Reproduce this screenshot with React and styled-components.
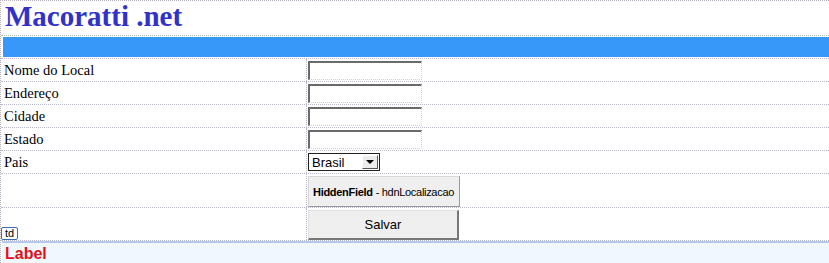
import React from 'react';
import styled, { createGlobalStyle } from 'styled-components';

const Global = createGlobalStyle`
  html, body { margin: 0; padding: 0; background: #fff; }
  body { width: 829px; height: 263px; overflow: hidden; }
`;

const Page = styled.div`
  width: 829px;
  height: 263px;
  box-sizing: border-box;
  border-top: 1px dotted #b8b0c0;
  border-left: 1px dotted #b8b0c0;
  font-family: "Liberation Serif", "Times New Roman", serif;
`;

const Header = styled.div`
  height: 34px;
  padding-left: 4px;
  border-bottom: 1px dotted #b0c0b0;
  display: flex;
  align-items: flex-end;
`;

const Title = styled.h1`
  margin: 0 0 4px;
  font-size: 29px;
  line-height: 29px;
  font-weight: bold;
  color: #3232c8;
`;

const BarCell = styled.div`
  padding: 1px 0 1px 2px;
  border-bottom: 1px dotted #c0b8d0;
`;

const Bar = styled.div`
  height: 20px;
  background: #3898fa;
`;

const Row = styled.div`
  display: grid;
  grid-template-columns: 305px 1fr;
  height: ${p => p.$h}px;
  border-bottom: 1px dotted #b8b8c8;
  box-sizing: border-box;
  position: relative;
`;

const LabelCell = styled.div`
  padding-left: 3px;
  font-size: 14.5px;
  display: flex;
  align-items: center;
  color: #000;
`;

const FieldCell = styled.div`
  border-left: 1px dotted #b8b8c8;
  padding-left: 1px;
  display: flex;
  align-items: ${p => p.$align || 'center'};
`;

const TextBox = styled.div`
  width: 114px;
  height: 19px;
  box-sizing: border-box;
  border-top: 2px solid #6a6a6a;
  border-left: 2px solid #6a6a6a;
  border-right: 1px dotted #d0d0d0;
  border-bottom: 1px dotted #d0d0d0;
  background: #fff;
`;

const Select = styled.div`
  width: 72px;
  height: 18px;
  box-sizing: border-box;
  border: 1px solid #222;
  display: flex;
  align-items: center;
  justify-content: space-between;
  font-family: "Liberation Sans", Arial, sans-serif;
  font-size: 13px;
  padding-left: 3px;
  background: #fff;
`;

const Arrow = styled.div`
  width: 16px;
  height: 14px;
  margin-right: 1px;
  background: #ececec;
  border-left: 1px solid #fff;
  border-top: 1px solid #fff;
  border-right: 1px solid #555;
  border-bottom: 1px solid #555;
  box-sizing: border-box;
  display: flex;
  align-items: center;
  justify-content: center;
  &::after {
    content: '';
    border-left: 4px solid transparent;
    border-right: 4px solid transparent;
    border-top: 4px solid #000;
  }
`;

const Hidden = styled.div`
  margin-top: 2px;
  width: 152px;
  height: 31px;
  box-sizing: border-box;
  background: #efefef;
  border: 1px solid #d8d8d8;
  border-right-color: #999;
  border-bottom-color: #999;
  font-family: "Liberation Sans", Tahoma, sans-serif;
  font-size: 11px;
  letter-spacing: -0.3px;
  white-space: nowrap;
  overflow: hidden;
  display: flex;
  align-items: center;
  padding-left: 4px;
  color: #000;
  b { font-weight: bold; margin-right: 3px; }
`;

const Button = styled.div`
  margin-top: 2px;
  width: 151px;
  height: 30px;
  box-sizing: border-box;
  background: #efefef;
  border: 1px solid #e0e0e0;
  border-right: 2px solid #777;
  border-bottom: 2px solid #777;
  font-family: "Liberation Sans", Arial, sans-serif;
  font-size: 13px;
  display: flex;
  align-items: center;
  justify-content: center;
  color: #000;
`;

const Tag = styled.span`
  position: absolute;
  left: 0;
  bottom: 0;
  height: 11px;
  padding: 0 3px;
  border: 1px solid #3c6ab8;
  border-radius: 2px;
  background: #fff;
  font-family: "Liberation Sans", Tahoma, sans-serif;
  font-size: 11px;
  line-height: 11px;
  color: #000;
`;

const Footer = styled.div`
  height: 22px;
  margin-left: 1px;
  border-top: 2px solid #b8c8e8;
  border-bottom: 1px solid #8aa0d0;
  background: #eef8fd;
  display: flex;
  align-items: center;
  padding-left: 3px;
  font-family: "Liberation Sans", Arial, sans-serif;
  font-size: 16px;
  font-weight: bold;
  color: #e0101c;
`;

const fields = ['Nome do Local', 'Endereço', 'Cidade', 'Estado'];

export default function App() {
  return (
    <>
      <Global />
      <Page>
        <Header>
          <Title>Macoratti .net</Title>
        </Header>
        <BarCell>
          <Bar />
        </BarCell>
        {fields.map(f => (
          <Row key={f} $h={23}>
            <LabelCell>{f}</LabelCell>
            <FieldCell><TextBox /></FieldCell>
          </Row>
        ))}
        <Row $h={23}>
          <LabelCell>Pais</LabelCell>
          <FieldCell><Select>Brasil<Arrow /></Select></FieldCell>
        </Row>
        <Row $h={34}>
          <LabelCell />
          <FieldCell $align="flex-start">
            <Hidden><b>HiddenField</b>- hdnLocalizacao</Hidden>
          </FieldCell>
        </Row>
        <Row $h={33}>
          <LabelCell />
          <FieldCell $align="flex-start"><Button>Salvar</Button></FieldCell>
          <Tag>td</Tag>
        </Row>
        <Footer>Label</Footer>
      </Page>
    </>
  );
}
